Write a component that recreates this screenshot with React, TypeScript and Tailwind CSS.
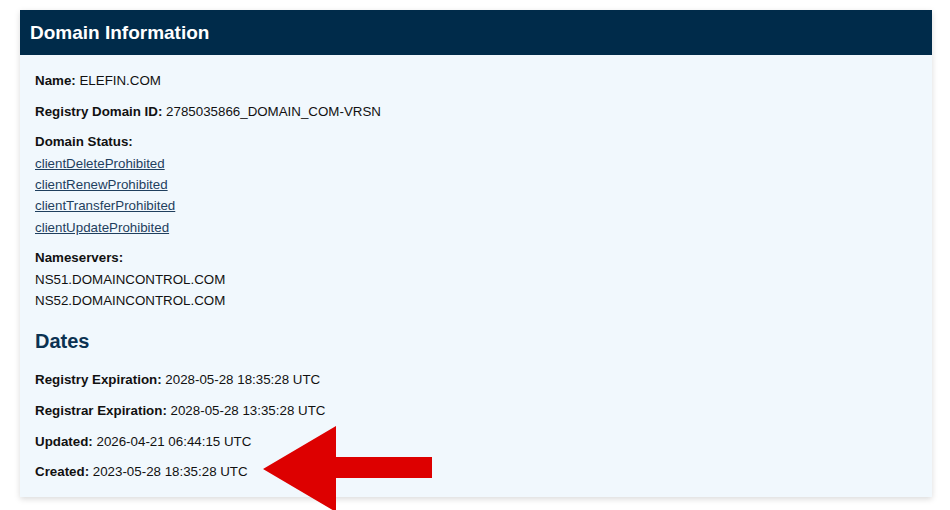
import React from "react";

const Row = ({ label, value }: { label: string; value: string }) => (
  <p className="mb-[9.4px]">
    <span className="font-bold">{label}</span> {value}
  </p>
);

export default function App() {
  const statuses = [
    "clientDeleteProhibited",
    "clientRenewProhibited",
    "clientTransferProhibited",
    "clientUpdateProhibited",
  ];
  return (
    <div
      className="relative w-[950px] h-[510px] overflow-hidden bg-white pt-[10px] pl-[20px] pr-[18px]"
      style={{ fontFamily: '"Liberation Sans", Arial, sans-serif' }}
    >
      <div className="bg-[#f1f8fd] shadow-[0_2px_6px_rgba(0,0,0,0.15)]">
        <div className="h-[45px] bg-[#002b4a] flex items-center pl-[10px]">
          <h1 className="text-white font-bold text-[19px] leading-none">Domain Information</h1>
        </div>
        <div className="pl-[15px] pt-[15px] pb-[5px] text-[13.33px] leading-[1.6] text-[#111]">
          <Row label="Name:" value="ELEFIN.COM" />
          <Row label="Registry Domain ID:" value="2785035866_DOMAIN_COM-VRSN" />
          <div className="mb-[9.4px]">
            <p className="font-bold">Domain Status:</p>
            {statuses.map((s) => (
              <p key={s}>
                <a href="#" className="underline text-[#1f3f5e]">
                  {s}
                </a>
              </p>
            ))}
          </div>
          <div>
            <p className="font-bold">Nameservers:</p>
            <p>NS51.DOMAINCONTROL.COM</p>
            <p>NS52.DOMAINCONTROL.COM</p>
          </div>
          <h2 className="mt-[18px] mb-[16px] text-[20px] leading-[24px] font-bold text-[#0b3252]">Dates</h2>
          <Row label="Registry Expiration:" value="2028-05-28 18:35:28 UTC" />
          <Row label="Registrar Expiration:" value="2028-05-28 13:35:28 UTC" />
          <Row label="Updated:" value="2026-04-21 06:44:15 UTC" />
          <Row label="Created:" value="2023-05-28 18:35:28 UTC" />
        </div>
      </div>
      <svg className="absolute left-0 top-0 pointer-events-none" width="950" height="510" viewBox="0 0 950 510">
        <polygon
          points="263,469 336,426 336,457 432,457 432,478 336,478 336,512"
          fill="#dd0000"
        />
      </svg>
    </div>
  );
}
